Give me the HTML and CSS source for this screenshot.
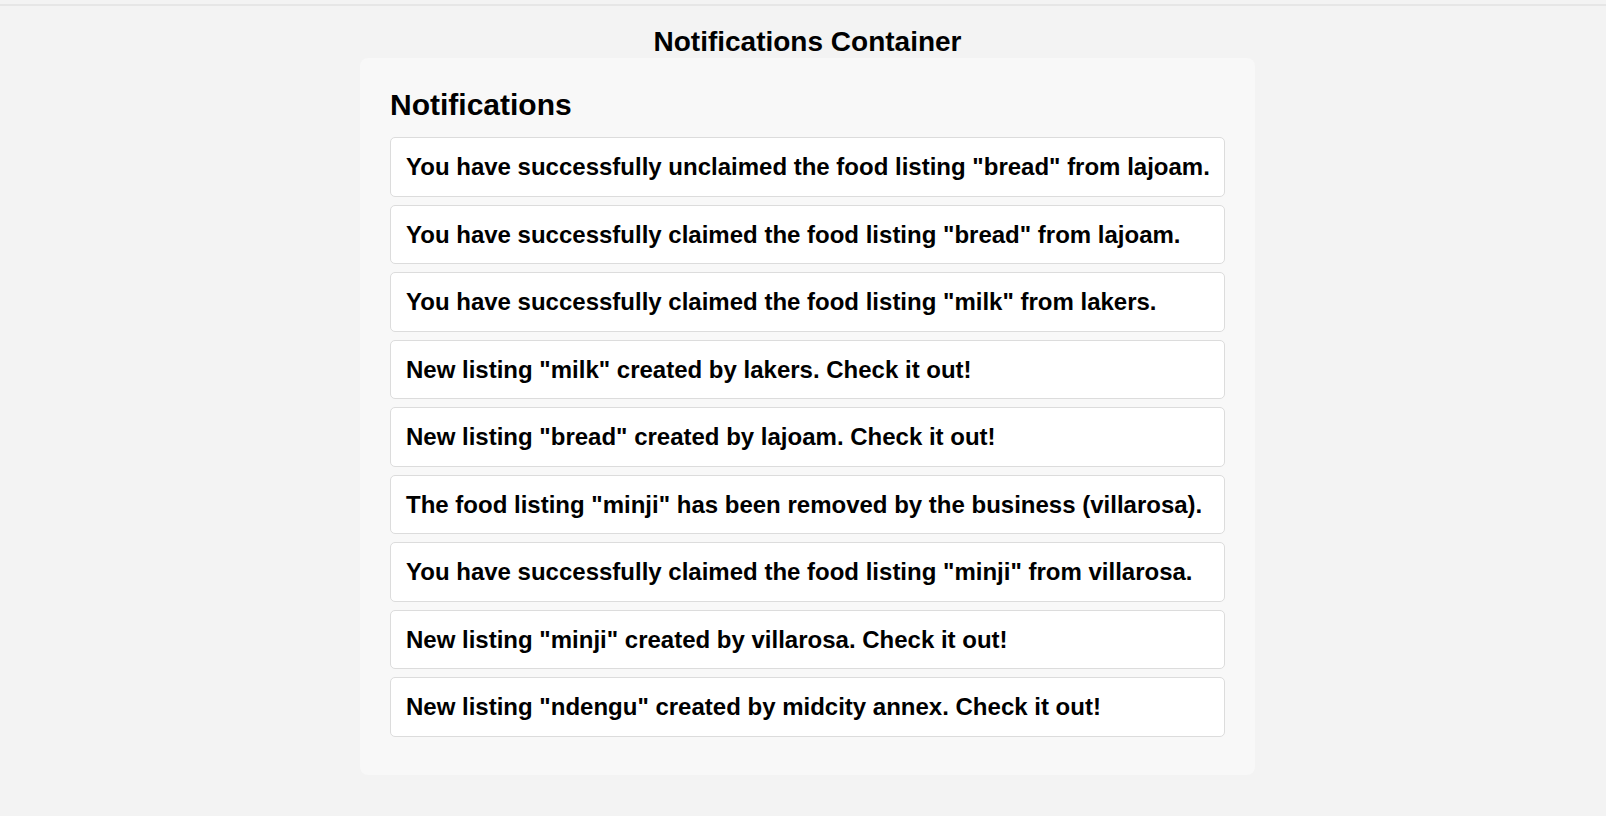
FILE: index.html
```html
<!DOCTYPE html>
<html lang="en">
<head>
<meta charset="utf-8">
<title>Notifications</title>
<link rel="stylesheet" href="styles.css">
</head>
<body>
<div class="topline"></div>
<main class="page">
  <h1 class="page-title">Notifications Container</h1>
  <section class="panel">
    <h2 class="panel-title">Notifications</h2>
    <ul class="list">
      <li class="item">You have successfully unclaimed the food listing "bread" from lajoam.</li>
      <li class="item">You have successfully claimed the food listing "bread" from lajoam.</li>
      <li class="item">You have successfully claimed the food listing "milk" from lakers.</li>
      <li class="item">New listing "milk" created by lakers. Check it out!</li>
      <li class="item">New listing "bread" created by lajoam. Check it out!</li>
      <li class="item">The food listing "minji" has been removed by the business (villarosa).</li>
      <li class="item">You have successfully claimed the food listing "minji" from villarosa.</li>
      <li class="item">New listing "minji" created by villarosa. Check it out!</li>
      <li class="item">New listing "ndengu" created by midcity annex. Check it out!</li>
    </ul>
  </section>
</main>
</body>
</html>
```
FILE: styles.css
```css
html, body {
  margin: 0;
  padding: 0;
}
body {
  background: #f3f3f3;
  font-family: "Liberation Sans", Arial, Helvetica, sans-serif;
  color: #000;
}
.topline {
  margin-top: 4px;
  height: 2px;
  background: #e6e6e6;
}
.page {
  padding: 0 0 0 9px;
  display: flex;
  flex-direction: column;
  align-items: center;
}
.page-title {
  margin: 20px 0 0;
  font-size: 28px;
  font-weight: bold;
  line-height: normal;
}
.panel {
  width: 895px;
  box-sizing: border-box;
  background: #f8f8f8;
  border-radius: 8px;
  padding: 30px 30px 30px;
}
.panel-title {
  margin: 0 0 15px;
  font-size: 30px;
  font-weight: bold;
  line-height: normal;
}
.list {
  list-style: none;
  margin: 0;
  padding: 0;
}
.item {
  background: #fff;
  border: 1px solid #dcdcdc;
  border-radius: 5px;
  padding: 15px;
  margin-bottom: 8px;
  font-size: 24px;
  font-weight: bold;
  line-height: 27.5px;
  white-space: nowrap;
}
```
